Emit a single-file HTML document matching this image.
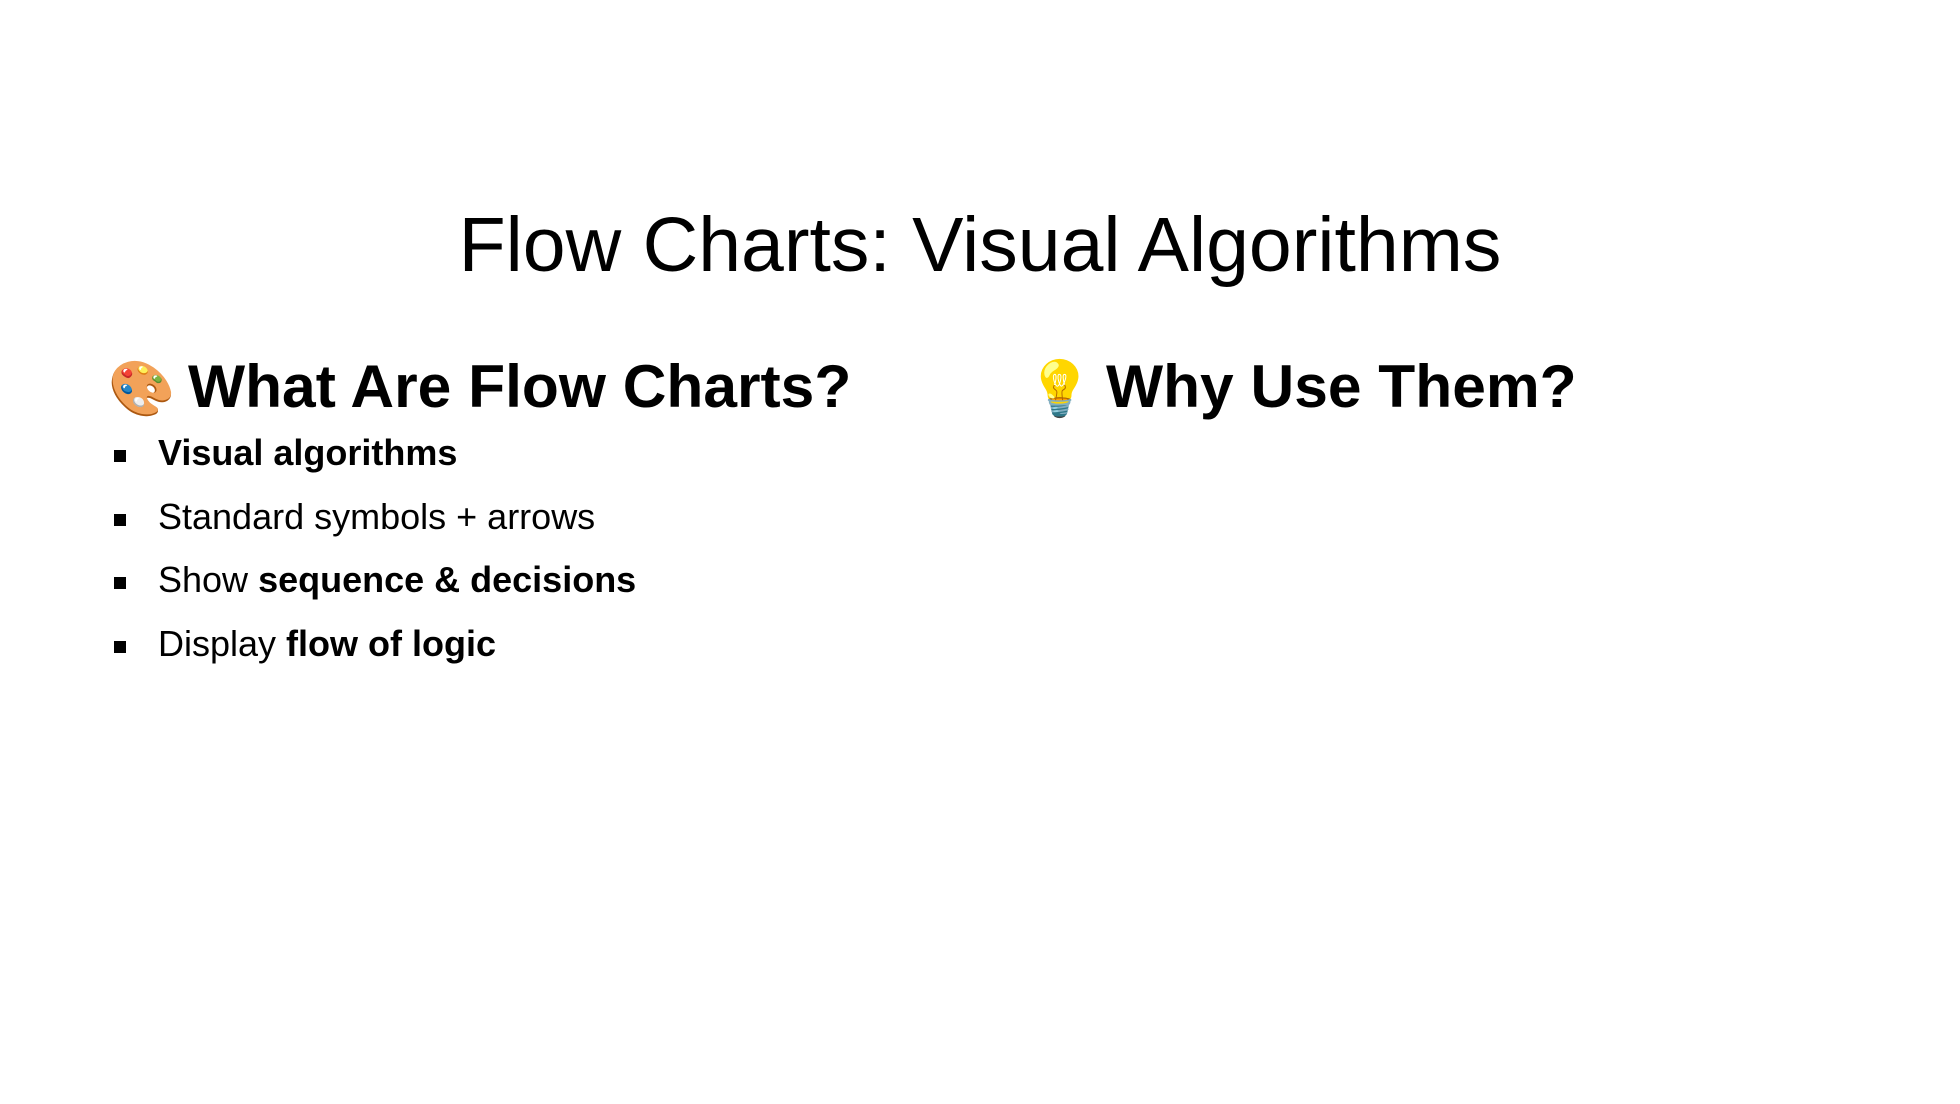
<!DOCTYPE html>
<html><head><meta charset="utf-8"><style>
html,body{margin:0;padding:0;background:#fff;width:1960px;height:1104px;overflow:hidden;font-family:"Liberation Sans","DejaVu Sans",sans-serif;color:#000}
.t{position:absolute;left:0;width:1960px;text-align:center;top:200px;font-size:77px;line-height:90px}
.h{position:absolute;font-weight:bold;font-size:60.5px;line-height:70px;top:351px;white-space:nowrap}
.e{font-size:54px;display:inline-block;width:80px}
ul{position:absolute;left:114px;top:431px;margin:0;padding:0;list-style:none;font-size:36px}
li{height:63.5px;line-height:44px;position:relative;padding-left:44px;white-space:nowrap}
li:before{content:"";position:absolute;left:0;top:19px;width:12px;height:12px;background:#000}
</style></head><body>
<div class="t">Flow Charts: Visual Algorithms</div>
<div class="h" style="left:108px"><span class="e">🎨</span>What Are Flow Charts?</div>
<div class="h" style="left:1026px"><span class="e">💡</span>Why Use Them?</div>
<ul>
<li><b>Visual algorithms</b></li>
<li>Standard symbols + arrows</li>
<li>Show <b>sequence &amp; decisions</b></li>
<li>Display <b>flow of logic</b></li>
</ul>
</body></html>
